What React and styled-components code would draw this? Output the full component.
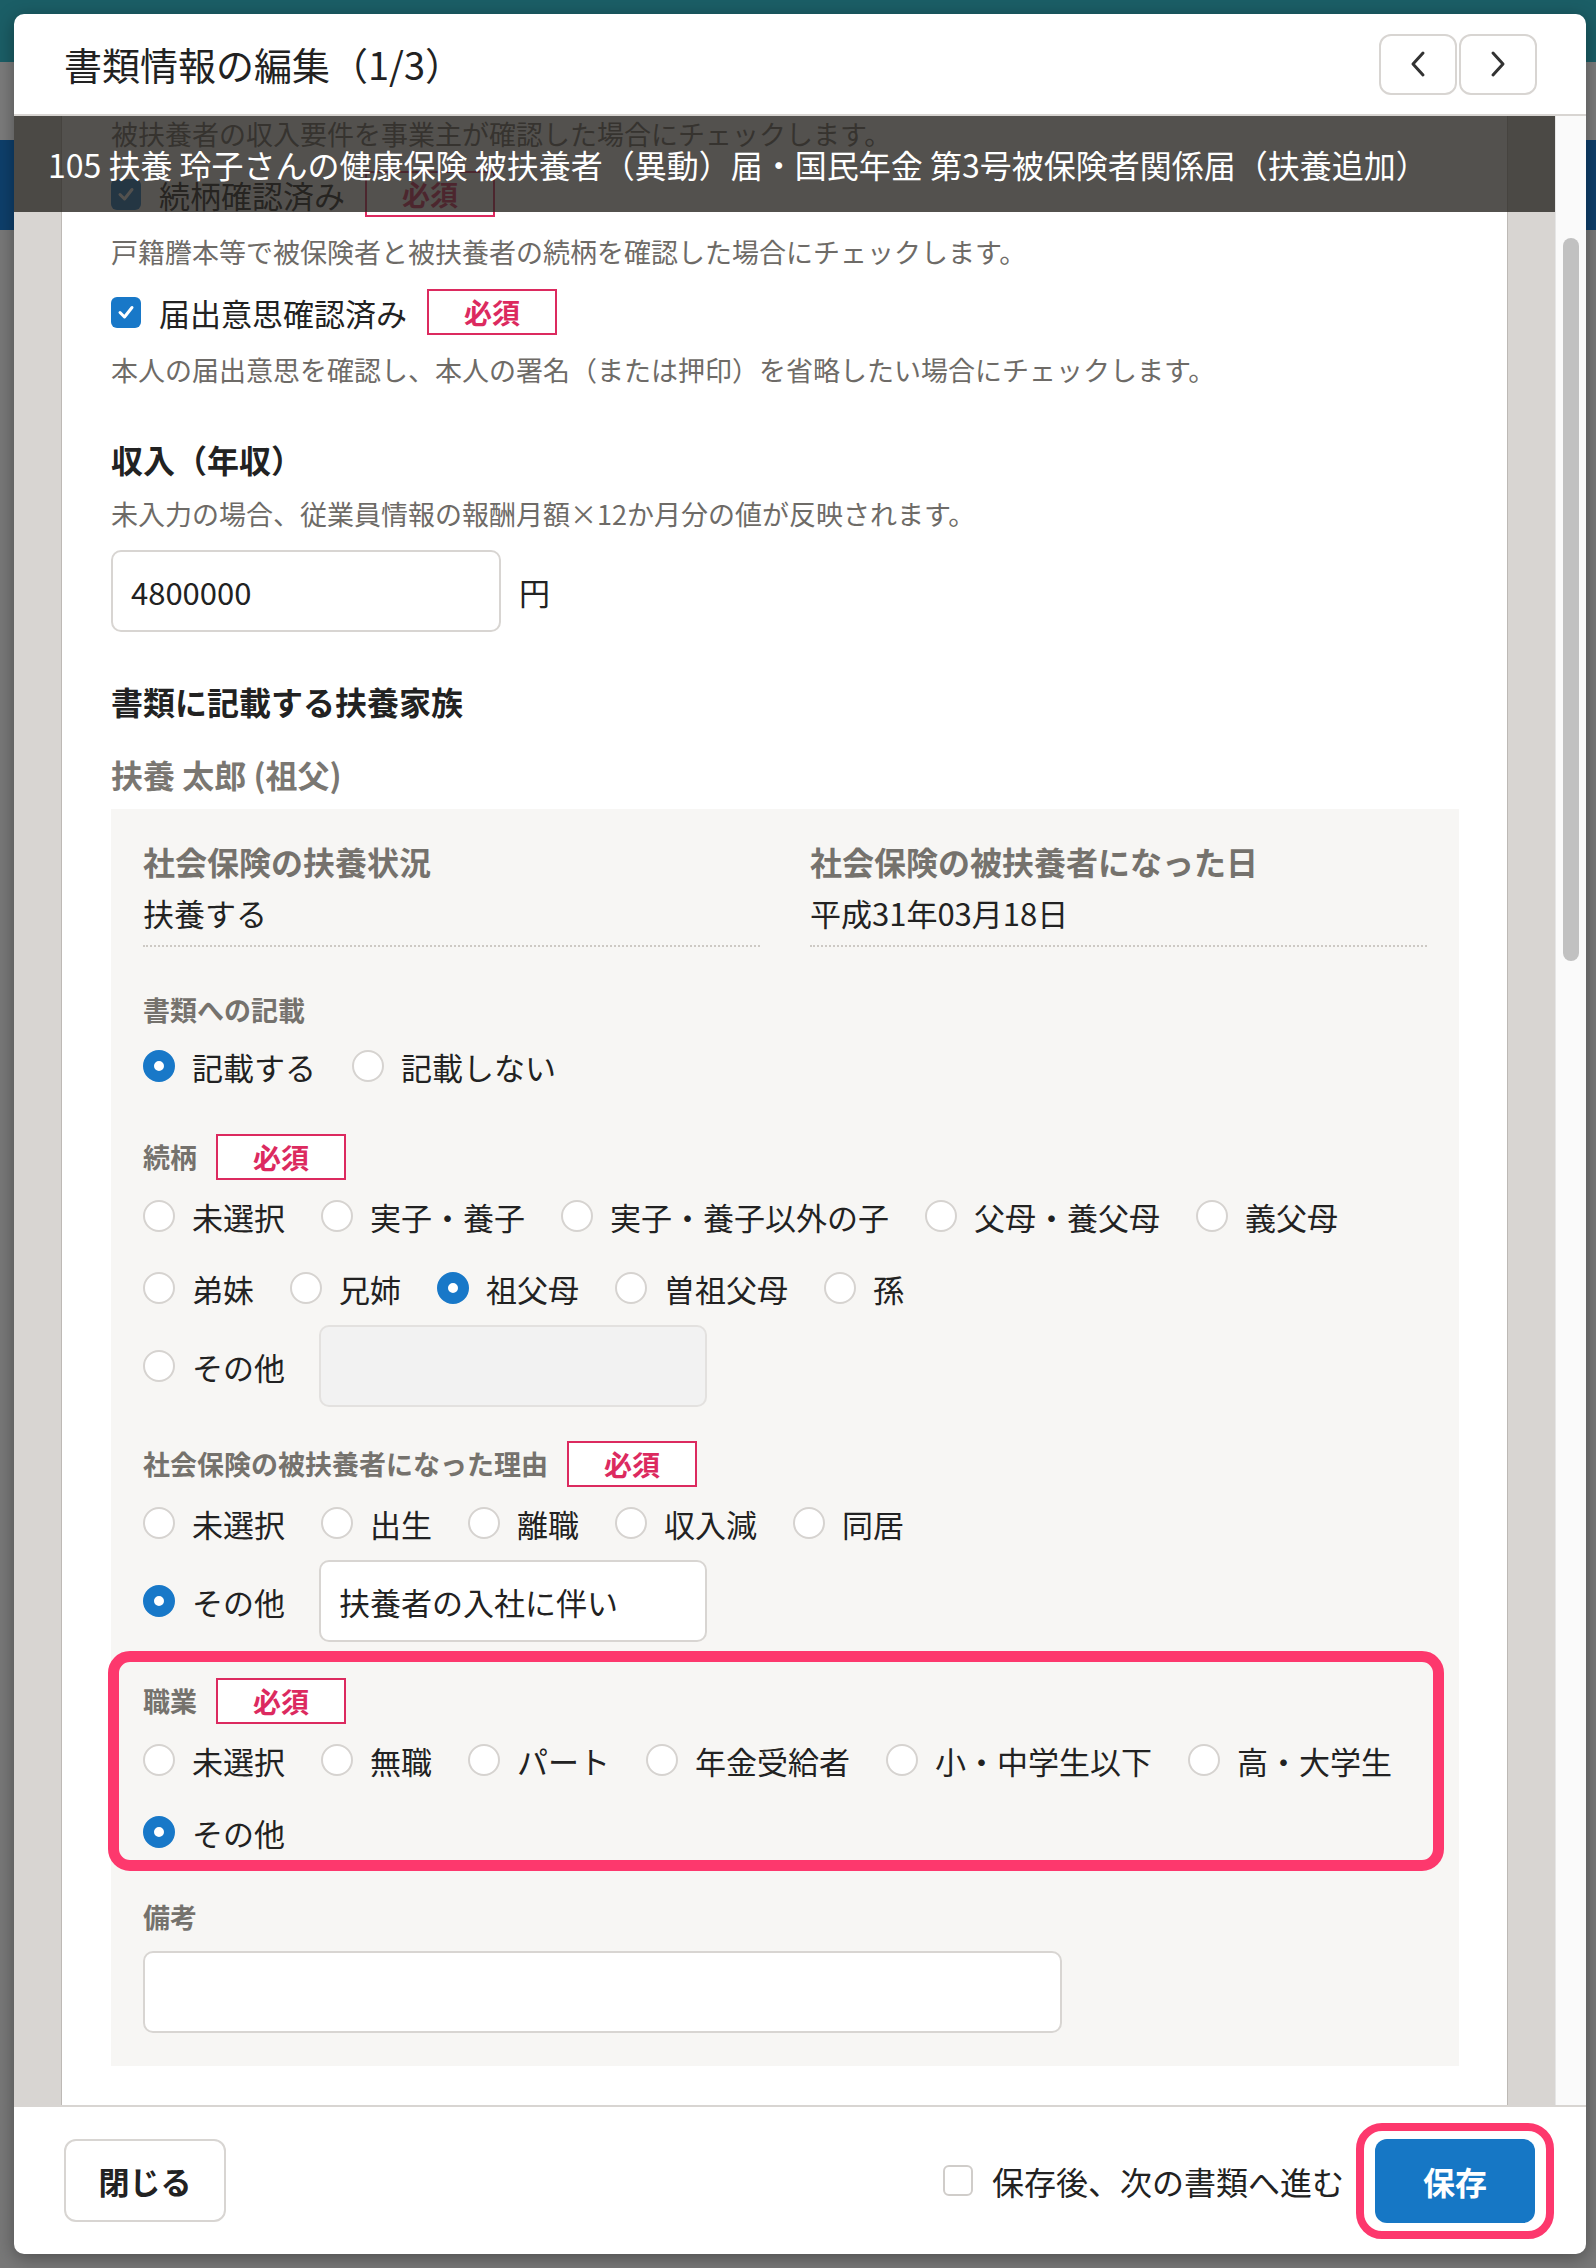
import React from "react";
import styled, { createGlobalStyle } from "styled-components";

const GlobalStyle = createGlobalStyle`
  html, body {
    margin: 0;
    padding: 0;
  }
  body {
    font-family: "Noto Sans CJK JP", "Noto Sans", sans-serif;
    color: #222;
    background: #5f5f5f;
  }
  * {
    box-sizing: border-box;
  }
`;

const Page = styled.div`
  position: relative;
  width: 1596px;
  height: 2268px;
  overflow: hidden;
  background: #f0f0f0;
`;

// the app behind the dialog, mostly hidden by it
const AppNav = styled.div`
  height: 62px;
  background: #37bdcc;
`;

const AppSubNav = styled.div`
  height: 78px;
  background: #f6f6f6;
`;

const AppTabs = styled.div`
  height: 90px;
  background: #1c7fd6;
`;

const Overlay = styled.div`
  position: absolute;
  inset: 0;
  display: flex;
  padding: 14px 10px 14px 14px;
  background: rgba(0, 0, 0, 0.5);
`;

const Modal = styled.div`
  flex: 1;
  display: flex;
  flex-direction: column;
  min-width: 0;
  background: #fff;
  border-radius: 10px;
  overflow: hidden;
  box-shadow: 0 4px 18px rgba(0, 0, 0, 0.35);
`;

const Header = styled.header`
  flex: none;
  height: 102px;
  display: flex;
  align-items: center;
  justify-content: space-between;
  padding: 0 49px 0 50px;
  border-bottom: 2px solid #d8d5d2;
`;

const Title = styled.h1`
  margin: 0;
  font-size: 38px;
  line-height: 56px;
  font-weight: 400;
  color: #222;
`;

const Pager = styled.div`
  display: flex;
  gap: 2px;
`;

const PagerButton = styled.button`
  width: 78px;
  height: 61px;
  display: flex;
  align-items: center;
  justify-content: center;
  padding: 0;
  background: #fff;
  border: 2px solid #d8d5d2;
  border-radius: 12px;
  color: #333;
`;

const Body = styled.div`
  position: relative;
  flex: 1;
  min-height: 0;
  display: flex;
`;

const ScrollArea = styled.div`
  flex: 1;
  overflow: hidden;
  padding: 0 48px;
  background: #d8d5d2;
`;

const Sheet = styled.div`
  margin-top: -63px;
  padding: 0 48px 300px 49px;
  background: #fff;
  box-shadow: -1px 0 0 #bdb9b5, 1px 0 0 #bdb9b5;
`;

const Track = styled.div`
  flex: none;
  width: 31px;
  padding-left: 7px;
  background: #fafafa;
  border-left: 1px solid #e6e6e6;
`;

const Thumb = styled.div`
  width: 16px;
  height: 723px;
  margin-top: 122px;
  border-radius: 8px;
  background: #c1c1c1;
`;

const Banner = styled.div`
  position: absolute;
  top: 0;
  left: 0;
  right: 31px;
  height: 96px;
  display: flex;
  align-items: center;
  padding-left: 34px;
  background: rgba(40, 38, 34, 0.8);
  color: #fff;
  font-size: 32px;
  white-space: nowrap;
`;

const CheckItem = styled.div`
  padding-bottom: 18px;
`;

const CheckRow = styled.div`
  height: 46px;
  display: flex;
  align-items: center;
  font-size: 31px;
  color: #222;
`;

const CheckBox = styled.span`
  flex: none;
  width: 30px;
  height: 31px;
  display: flex;
  align-items: center;
  justify-content: center;
  border-radius: 6px;
  background: ${(p) => (p.$on ? "#1878c8" : "#fff")};
  border: ${(p) => (p.$on ? "none" : "2px solid #d0cdca")};
`;

const CheckText = styled.span`
  margin: 0 20px 0 18px;
`;

const Required = styled.span`
  flex: none;
  width: 130px;
  height: 46px;
  display: flex;
  align-items: center;
  justify-content: center;
  border: 2px solid #dc2a5f;
  background: #fff;
  color: #dc2a5f;
  font-size: 28px;
  font-weight: 700;
`;

const Help = styled.p`
  margin: ${(p) => p.$top ?? 16}px 0 0;
  font-size: 27px;
  line-height: 38px;
  color: #6e6b67;
`;

const SectionTitle = styled.h2`
  margin: ${(p) => p.$top}px 0 0;
  font-size: 32px;
  line-height: 44px;
  font-weight: 700;
  color: #222;
`;

const InputLine = styled.div`
  margin-top: ${(p) => p.$top}px;
  display: flex;
  align-items: center;
  font-size: 31px;
`;

const TextBox = styled.div`
  flex: none;
  width: ${(p) => p.$w}px;
  height: 82px;
  display: flex;
  align-items: center;
  padding: 0 18px;
  font-size: 31px;
  color: #222;
  background: ${(p) => (p.$disabled ? "#f2f2f2" : "#fff")};
  border: 2px solid ${(p) => (p.$disabled ? "#e3e1df" : "#d8d5d2")};
  border-radius: 10px;
`;

const Unit = styled.span`
  margin-left: 18px;
`;

const PersonName = styled.div`
  margin-top: 29px;
  font-size: 32px;
  line-height: 44px;
  font-weight: 700;
  color: #7a7772;
`;

const Panel = styled.div`
  margin-top: 13px;
  padding: 30px 32px 33px;
  background: #f7f6f4;
`;

const InfoGrid = styled.div`
  display: grid;
  grid-template-columns: 1fr 1fr;
  column-gap: 50px;
`;

const InfoCell = styled.div`
  padding-bottom: 10px;
  border-bottom: 2px dotted #cdc9c4;
`;

const InfoLabel = styled.div`
  font-size: 32px;
  line-height: 44px;
  font-weight: 700;
  color: #75726d;
`;

const InfoValue = styled.div`
  margin-top: 8px;
  font-size: 31px;
  line-height: 44px;
  color: #222;
`;

const Field = styled.div`
  margin-top: ${(p) => p.$top}px;
`;

const LabelRow = styled.div`
  min-height: 40px;
  display: flex;
  align-items: center;
  gap: 19px;
`;

const FieldLabel = styled.span`
  font-size: 27px;
  line-height: 40px;
  font-weight: 700;
  color: #75726d;
`;

const RadioRow = styled.div`
  margin-top: 11px;
  display: flex;
  flex-wrap: wrap;
  column-gap: 36px;
  row-gap: 22px;
`;

const RadioItem = styled.span`
  height: 50px;
  display: inline-flex;
  align-items: center;
  font-size: 31px;
  color: #222;
  white-space: nowrap;
`;

const RadioMark = styled.span`
  flex: none;
  width: 32px;
  height: 32px;
  margin-right: 17px;
  border-radius: 50%;
  background: #fff;
  border: ${(p) => (p.$on ? "11px solid #1878c8" : "2px solid #d6d3d0")};
`;

const OtherRow = styled.div`
  margin-top: 12px;
  display: flex;
  align-items: center;
  gap: 34px;
`;

const Highlight = styled.div`
  margin: 9px -17px 0 -35px;
  padding: 16px 6px 3px 24px;
  border: 11px solid #fd386d;
  border-radius: 22px;
`;

const Footer = styled.footer`
  flex: none;
  height: 149px;
  display: flex;
  align-items: center;
  justify-content: space-between;
  padding: 0 32px 0 50px;
  border-top: 2px solid #d8d5d2;
`;

const CloseButton = styled.button`
  width: 162px;
  height: 83px;
  padding: 0;
  background: #fff;
  border: 2px solid #d8d5d2;
  border-radius: 12px;
  font-family: inherit;
  font-size: 31px;
  font-weight: 700;
  color: #222;
`;

const FooterRight = styled.div`
  display: flex;
  align-items: center;
`;

const NextLabel = styled.span`
  margin: 0 12px 0 19px;
  font-size: 32px;
  color: #222;
`;

const SaveRing = styled.div`
  display: flex;
  padding: 8px 11px;
  border: 8px solid #fd386d;
  border-radius: 26px;
`;

const SaveButton = styled.button`
  width: 160px;
  height: 84px;
  padding: 0;
  background: #1677c5;
  border: none;
  border-radius: 12px;
  font-family: inherit;
  font-size: 32px;
  font-weight: 700;
  color: #fff;
`;

const Chevron = ({ dir }) => (
  <svg width="20" height="28" viewBox="0 0 20 28" fill="none">
    <polyline
      points={dir === "left" ? "15,3 5,14 15,25" : "5,3 15,14 5,25"}
      stroke="currentColor"
      strokeWidth="3"
      strokeLinecap="round"
      strokeLinejoin="round"
    />
  </svg>
);

const Tick = () => (
  <svg width="20" height="20" viewBox="0 0 20 20" fill="none">
    <polyline points="4,10.5 8.5,15 16,5.5" stroke="#fff" strokeWidth="3" strokeLinecap="round" strokeLinejoin="round" />
  </svg>
);

const Radio = ({ label, on }) => (
  <RadioItem>
    <RadioMark $on={on} />
    {label}
  </RadioItem>
);

const Check = ({ label, help }) => (
  <CheckItem>
    <CheckRow>
      <CheckBox $on>
        <Tick />
      </CheckBox>
      <CheckText>{label}</CheckText>
      <Required>必須</Required>
    </CheckRow>
    <Help>{help}</Help>
  </CheckItem>
);

const checks = [
  ["収入要件確認済み", "被扶養者の収入要件を事業主が確認した場合にチェックします。"],
  ["続柄確認済み", "戸籍謄本等で被保険者と被扶養者の続柄を確認した場合にチェックします。"],
  ["届出意思確認済み", "本人の届出意思を確認し、本人の署名（または押印）を省略したい場合にチェックします。"],
];

const relations = ["未選択", "実子・養子", "実子・養子以外の子", "父母・養父母", "義父母", "弟妹", "兄姉", "祖父母", "曽祖父母", "孫"];
const reasons = ["未選択", "出生", "離職", "収入減", "同居"];
const jobs = ["未選択", "無職", "パート", "年金受給者", "小・中学生以下", "高・大学生"];

const App = () => (
  <Page>
    <GlobalStyle />
    <AppNav />
    <AppSubNav />
    <AppTabs />
    <Overlay>
      <Modal>
        <Header>
          <Title>書類情報の編集（1/3）</Title>
          <Pager>
            <PagerButton>
              <Chevron dir="left" />
            </PagerButton>
            <PagerButton>
              <Chevron dir="right" />
            </PagerButton>
          </Pager>
        </Header>

        <Body>
          <ScrollArea>
            <Sheet>
              {checks.map(([label, help]) => (
                <Check key={label} label={label} help={help} />
              ))}

              <SectionTitle $top={30}>収入（年収）</SectionTitle>
              <Help $top={14}>未入力の場合、従業員情報の報酬月額×12か月分の値が反映されます。</Help>
              <InputLine $top={17}>
                <TextBox $w={390}>4800000</TextBox>
                <Unit>円</Unit>
              </InputLine>

              <SectionTitle $top={47}>書類に記載する扶養家族</SectionTitle>
              <PersonName>扶養 太郎 (祖父)</PersonName>

              <Panel>
                <InfoGrid>
                  <InfoCell>
                    <InfoLabel>社会保険の扶養状況</InfoLabel>
                    <InfoValue>扶養する</InfoValue>
                  </InfoCell>
                  <InfoCell>
                    <InfoLabel>社会保険の被扶養者になった日</InfoLabel>
                    <InfoValue>平成31年03月18日</InfoValue>
                  </InfoCell>
                </InfoGrid>

                <Field $top={43}>
                  <LabelRow>
                    <FieldLabel>書類への記載</FieldLabel>
                  </LabelRow>
                  <RadioRow>
                    <Radio label="記載する" on />
                    <Radio label="記載しない" />
                  </RadioRow>
                </Field>

                <Field $top={43}>
                  <LabelRow>
                    <FieldLabel>続柄</FieldLabel>
                    <Required>必須</Required>
                  </LabelRow>
                  <RadioRow>
                    {relations.map((r) => (
                      <Radio key={r} label={r} on={r === "祖父母"} />
                    ))}
                  </RadioRow>
                  <OtherRow>
                    <Radio label="その他" />
                    <TextBox $w={388} $disabled />
                  </OtherRow>
                </Field>

                <Field $top={34}>
                  <LabelRow>
                    <FieldLabel>社会保険の被扶養者になった理由</FieldLabel>
                    <Required>必須</Required>
                  </LabelRow>
                  <RadioRow>
                    {reasons.map((r) => (
                      <Radio key={r} label={r} />
                    ))}
                  </RadioRow>
                  <OtherRow>
                    <Radio label="その他" on />
                    <TextBox $w={388}>扶養者の入社に伴い</TextBox>
                  </OtherRow>
                </Field>

                <Highlight>
                  <LabelRow>
                    <FieldLabel>職業</FieldLabel>
                    <Required>必須</Required>
                  </LabelRow>
                  <RadioRow>
                    {jobs.map((r) => (
                      <Radio key={r} label={r} />
                    ))}
                    <Radio label="その他" on />
                  </RadioRow>
                </Highlight>

                <Field $top={26}>
                  <LabelRow>
                    <FieldLabel>備考</FieldLabel>
                  </LabelRow>
                  <InputLine $top={14}>
                    <TextBox $w={919} />
                  </InputLine>
                </Field>
              </Panel>
            </Sheet>
          </ScrollArea>
          <Track>
            <Thumb />
          </Track>
          <Banner>105 扶養 玲子さんの健康保険 被扶養者（異動）届・国民年金 第3号被保険者関係届（扶養追加）</Banner>
        </Body>

        <Footer>
          <CloseButton>閉じる</CloseButton>
          <FooterRight>
            <CheckBox />
            <NextLabel>保存後、次の書類へ進む</NextLabel>
            <SaveRing>
              <SaveButton>保存</SaveButton>
            </SaveRing>
          </FooterRight>
        </Footer>
      </Modal>
    </Overlay>
  </Page>
);

export default App;
